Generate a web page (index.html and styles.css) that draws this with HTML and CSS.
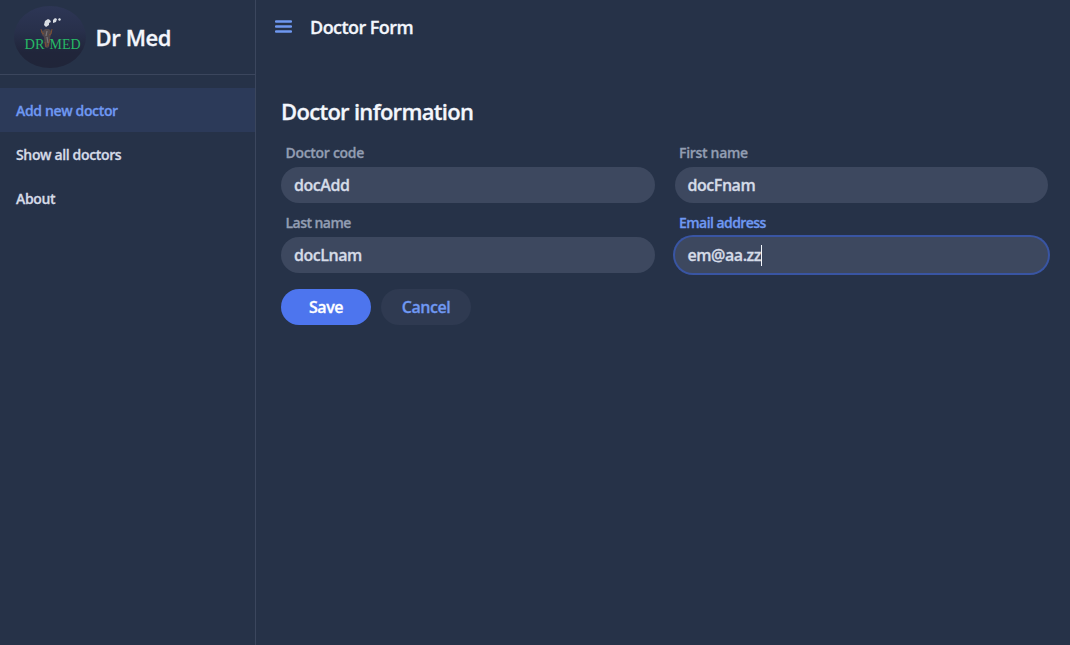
FILE: index.html
```html
<!DOCTYPE html>
<html lang="en">
<head>
<meta charset="utf-8">
<title>Doctor Form</title>
<link rel="stylesheet" href="styles.css">
</head>
<body>
<div class="app">
  <aside class="drawer">
    <header class="brand">
      <svg class="logo" width="72" height="62" viewBox="0 0 72 62">
        <defs><linearGradient id="orb" x1="0" y1="0" x2="0" y2="1"><stop offset="0" stop-color="#2d3655"/><stop offset=".4" stop-color="#28304b"/><stop offset=".75" stop-color="#20253a"/><stop offset="1" stop-color="#202539"/></linearGradient></defs>
        <ellipse cx="36" cy="31" rx="36" ry="31" fill="url(#orb)"/>
        <path d="M27 24l2 1 2-2h4l2 2 1-1-1 5-1 3-1 9-2 1-2-1-1-10-2-2z" fill="#50474a"/>
        <path d="M27 23l1 4 2 1M38 23l-1 5-2 1M31 36l1 5M36 33l-2 7" fill="none" stroke="#8e552e" stroke-width=".8"/>
        <path d="M33 25l-1 5M33 31l1 6" stroke="#77757a" stroke-width="1.2"/>
        <path d="M31 15l3-2 2 1 1 2-2 1v2l-3 2-2-2zM39 14l2-2 2 1-1 3-3 1zM44 13l2-1 1 2-2 1z" fill="#d8dce2"/>
        <text class="logo-text" x="10.5" y="42.5" textLength="20" lengthAdjust="spacingAndGlyphs">DR</text>
        <text class="logo-text" x="35.5" y="42.5" textLength="31" lengthAdjust="spacingAndGlyphs">MED</text>
      </svg>
      <span class="brand-name">Dr Med</span>
    </header>
    <nav class="nav">
      <a class="nav-item active">Add new doctor</a>
      <a class="nav-item">Show all doctors</a>
      <a class="nav-item">About</a>
    </nav>
  </aside>
  <main class="content">
    <header class="topbar">
      <svg class="menu" width="17" height="14" viewBox="0 0 17 14"><path d="M1 1.5h15M1 6.5h15M1 11.5h15" stroke="#6f98f0" stroke-width="2.4" stroke-linecap="round"/></svg>
      <span class="page-title">Doctor Form</span>
    </header>
    <form class="form">
      <h2 class="heading">Doctor information</h2>
      <div class="fields">
        <div class="field"><span class="label">Doctor code</span><div class="input"><span>docAdd</span></div></div>
        <div class="field"><span class="label">First name</span><div class="input"><span>docFnam</span></div></div>
        <div class="field"><span class="label narrow">Last name</span><div class="input"><span>docLnam</span></div></div>
        <div class="field focused"><span class="label narrow">Email address</span><div class="input"><span>em@aa.zz</span><i class="caret"></i></div></div>
      </div>
      <div class="actions">
        <button type="button" class="button primary">Save</button>
        <button type="button" class="button">Cancel</button>
      </div>
    </form>
  </main>
</div>
</body>
</html>
```
FILE: styles.css
```css
* { box-sizing: border-box; }
body {
  margin: 0;
  background: #263248;
  color: #d5dbe7;
  font-family: "Open Sans", "Noto Sans", sans-serif;
  font-weight: 600;
  -webkit-text-stroke: 0.3px;
}
.app { display: flex; height: 645px; }
.drawer { width: 256px; flex: none; border-right: 1px solid #3b465d; }
.brand {
  display: flex;
  align-items: center;
  gap: 9.5px;
  height: 75px;
  padding: 0 0 1px 14px;
  border-bottom: 1px solid #3b465d;
}
.logo { flex: none; }
.logo-text { font: 14px "Liberation Serif", serif; fill: #27b866; -webkit-text-stroke: 0; }
.brand-name { color: #f3f6fc; font-size: 22px; line-height: 28px; letter-spacing: -0.4px; }
.nav { padding-top: 13px; }
.nav-item {
  display: flex;
  align-items: center;
  height: 44px;
  padding: 0 16px;
  font-size: 14px;
  letter-spacing: -0.35px;
}
.nav-item.active { background: #2c3a59; color: #6f98f2; }
.content { flex: 1; min-width: 0; }
.topbar { display: flex; align-items: center; height: 54px; padding-left: 18.5px; gap: 18.5px; }
.menu { margin-top: 0; }
.page-title { color: #f3f6fc; font-size: 18px; line-height: 24px; letter-spacing: -0.55px; }
.form { padding: 43px 22px 0 25px; }
.heading { margin: 0; color: #f3f6fc; font-size: 22px; font-weight: 600; line-height: 28px; letter-spacing: -0.7px; }
.fields { display: grid; grid-template-columns: 1fr 1fr; column-gap: 20px; padding-top: 18px; }
.field { height: 70px; }
.label {
  display: block;
  height: 24px;
  padding-left: 4.5px;
  color: #929db2;
  font-size: 14px;
  line-height: 19px;
  letter-spacing: -0.3px;
}
.label.narrow { letter-spacing: -0.55px; }
.input {
  display: flex;
  align-items: center;
  height: 36px;
  padding-left: 13px;
  border-radius: 18px;
  background: #3d485f;
  font-size: 16px;
  letter-spacing: -0.45px;
}
.focused .label { color: #6f98f2; }
.focused .input { box-shadow: 0 0 0 2px #3955a3; }
.caret { width: 1px; height: 21px; background: #f3f6fc; }
.actions { display: flex; gap: 10px; padding-top: 6px; }
.button {
  width: 90px;
  height: 36px;
  padding: 0;
  border: 0;
  border-radius: 18px;
  background: #2f3a51;
  color: #6f98f2;
  font: inherit;
  font-size: 16px;
  letter-spacing: -0.45px;
}
.button.primary { background: #4d75ee; color: #fff; }
```
